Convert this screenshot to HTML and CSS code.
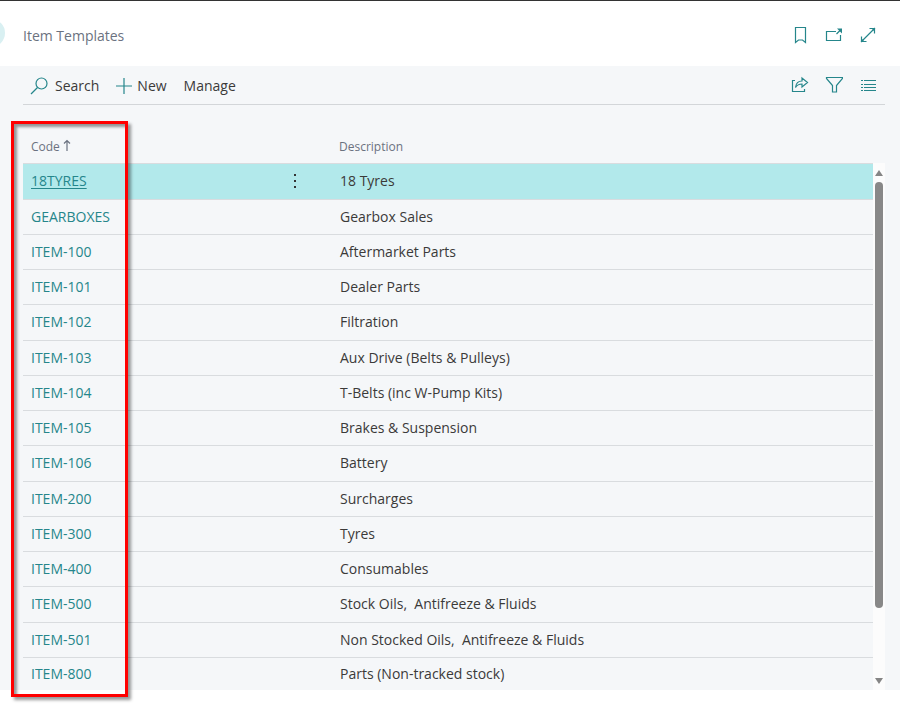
FILE: index.html
```html
<!DOCTYPE html>
<html lang="en">
<head>
<meta charset="utf-8">
<title>Item Templates</title>
<link rel="stylesheet" href="styles.css">
</head>
<body>
<header class="page-header">
  <span class="back-circle"></span>
  <h1 class="title">Item Templates</h1>
  <div class="icons">
    <button class="icon-btn" aria-label="Bookmark"><svg width="18" height="18" viewBox="0 0 18 18"><path d="M4.500 1.500h10v15l-3-2.500h-4l-3 2.500z"/></svg></button>
    <button class="icon-btn" aria-label="Open in new window"><svg width="18" height="18" viewBox="0 0 18 18"><path d="M11 5.500H1.500v9h14V9M11.500 8l4-4"/><path class="solid" d="M12 2.500h5v5z"/></svg></button>
    <button class="icon-btn" aria-label="Expand"><svg width="18" height="18" viewBox="0 0 18 18"><path d="M2 16L16 2M10.500 2.500h5v5M2.500 10.500v5h5"/><path class="solid" d="M12 2h4v4zM2 12v4h4z"/></svg></button>
  </div>
</header>
<main class="panel">
  <div class="toolbar">
    <button class="action"><svg width="18" height="18" viewBox="0 0 18 18"><circle cx="11.500" cy="6.500" r="5.500"/><path d="M7.500 10.500L1 17"/></svg>Search</button>
    <button class="action new"><svg width="16" height="16" viewBox="0 0 16 16"><path d="M8 0v16M0 8h16"/></svg>New</button>
    <button class="action">Manage</button>
    <div class="icons">
      <button class="icon-btn" aria-label="Share"><svg width="18" height="18" viewBox="0 0 18 18"><path d="M4 4.500H1.500v11h12V13"/><path d="M4.500 11.500C5 7 7.500 5 11 5V2l5.500 4.500L11 11V8C8 8 6 9 4.500 11.500z"/></svg></button>
      <button class="icon-btn" aria-label="Filter"><svg width="18" height="18" viewBox="0 0 18 18"><path d="M1.500 1.500h16v1l-6 7v6.500h-4V9.500l-6-7z"/></svg></button>
      <button class="icon-btn" aria-label="List view"><svg width="18" height="18" viewBox="0 0 18 18"><path d="M5 4.500h12M5 8.500h12M5 11.500h12M5 14.500h12M2 4.500h2M2 8.500h2M2 11.500h2M2 14.500h2"/></svg></button>
    </div>
  </div>
  <div class="list">
    <table class="items">
      <thead><tr><th class="code">Code<svg class="sort" width="8" height="12" viewBox="0 0 8 12"><path d="M4 12V2M1 4.500L4 1.500l3 3"/></svg></th><th class="menu"></th><th>Description</th></tr></thead>
      <tbody>
        <tr class="selected"><td><a href="#">18TYRES</a></td><td class="menu"><button class="more" aria-label="Show more options"><svg width="4" height="16" viewBox="0 0 4 16"><path d="M1 1h2v2H1zM1 7h2v2H1zM1 13h2v2H1z"/></svg></button></td><td>18 Tyres</td></tr>
        <tr><td><a href="#">GEARBOXES</a></td><td></td><td>Gearbox Sales</td></tr>
        <tr><td><a href="#">ITEM-100</a></td><td></td><td>Aftermarket Parts</td></tr>
        <tr><td><a href="#">ITEM-101</a></td><td></td><td>Dealer Parts</td></tr>
        <tr><td><a href="#">ITEM-102</a></td><td></td><td>Filtration</td></tr>
        <tr><td><a href="#">ITEM-103</a></td><td></td><td>Aux Drive (Belts &amp; Pulleys)</td></tr>
        <tr><td><a href="#">ITEM-104</a></td><td></td><td>T-Belts (inc W-Pump Kits)</td></tr>
        <tr><td><a href="#">ITEM-105</a></td><td></td><td>Brakes &amp; Suspension</td></tr>
        <tr><td><a href="#">ITEM-106</a></td><td></td><td>Battery</td></tr>
        <tr><td><a href="#">ITEM-200</a></td><td></td><td>Surcharges</td></tr>
        <tr><td><a href="#">ITEM-300</a></td><td></td><td>Tyres</td></tr>
        <tr><td><a href="#">ITEM-400</a></td><td></td><td>Consumables</td></tr>
        <tr><td><a href="#">ITEM-500</a></td><td></td><td>Stock Oils,&nbsp; Antifreeze &amp; Fluids</td></tr>
        <tr><td><a href="#">ITEM-501</a></td><td></td><td>Non Stocked Oils,&nbsp; Antifreeze &amp; Fluids</td></tr>
        <tr><td><a href="#">ITEM-800</a></td><td></td><td>Parts (Non-tracked stock)</td></tr>
      </tbody>
    </table>
    <div class="scrollbar">
      <svg width="8" height="6" viewBox="0 0 8 6"><path d="M4 0l4 6H0z"/></svg>
      <div class="track"><div class="thumb"></div></div>
      <svg width="8" height="6" viewBox="0 0 8 6"><path d="M0 0h8L4 6z"/></svg>
    </div>
    <div class="highlight"></div>
  </div>
</main>
</body>
</html>
```
FILE: styles.css
```css
* { box-sizing: border-box; }

body {
  margin: 0;
  height: 100vh;
  padding-bottom: 15px;
  border-top: 1px solid #333;
  display: flex;
  flex-direction: column;
  background: #fff;
  color: #3b3a39;
  font: 14px/20px "Open Sans", "Noto Sans", sans-serif;
}

button {
  padding: 0;
  border: 0;
  background: none;
  color: inherit;
  font: inherit;
}

svg {
  display: block;
  fill: none;
  stroke: #25868b;
  stroke-width: 1.2;
}

.page-header {
  position: relative;
  flex: none;
  display: flex;
  align-items: center;
  height: 65px;
  padding: 4px 23px 0;
  overflow: hidden;
}

.back-circle {
  position: absolute;
  left: -23px;
  top: 18px;
  width: 28px;
  height: 28px;
  border-radius: 50%;
  background: #d9f0f2;
}

.title {
  margin: 0;
  color: #6b7280;
  font-size: 14px;
  font-weight: 400;
}

.icons {
  display: flex;
  gap: 16px;
  margin-left: auto;
  padding-bottom: 2px;
}

.icon-btn { width: 18px; }

.solid { fill: #25868b; stroke: none; }

.panel {
  flex: 1;
  min-height: 0;
  display: flex;
  flex-direction: column;
  padding: 0 15px 0 23px;
  background: #f5f7f9;
}

.toolbar {
  flex: none;
  display: flex;
  align-items: center;
  gap: 17px;
  height: 39px;
  padding: 2px 8px 0 7px;
  border-bottom: 1px solid #d3d6d9;
}

.action {
  display: flex;
  align-items: center;
  gap: 7px;
}

.new { gap: 5px; }

.list {
  position: relative;
  flex: 1;
  min-height: 0;
  display: flex;
  align-items: flex-start;
  padding-top: 25px;
}

.items {
  flex: 1;
  border-collapse: collapse;
  table-layout: fixed;
}

th, td {
  height: 35px;
  padding: 0 8px;
  border-bottom: 1px solid #d9dcdf;
  text-align: left;
  font-weight: 400;
}

td:last-child { padding-left: 9px; }

tr:nth-child(4n+1) td { height: 36px; }

tbody tr:last-child td {
  height: 34px;
  border-bottom: 0;
}

th {
  height: 33px;
  padding-top: 2px;
  color: #6b7280;
  font-size: 12px;
}

.code { width: 236px; }

.menu {
  width: 72px;
  padding: 0;
}

.sort {
  display: inline-block;
  margin-left: 3px;
  stroke: #6b7280;
}

.more {
  display: block;
  width: 4px;
  margin: 0 auto;
}

.more svg { fill: #333; stroke: none; }

.items a {
  color: #25868b;
  text-decoration: none;
}

.selected { background: #b2e9eb; }

.selected a {
  text-decoration: underline;
  text-underline-offset: 2px;
}

.scrollbar {
  align-self: stretch;
  display: flex;
  flex-direction: column;
  align-items: center;
  gap: 6px;
  width: 12px;
  margin-top: 33px;
  padding: 7px 0 6px;
  background: #fcfcfc;
}

.scrollbar svg { fill: #858585; stroke: none; }

.track {
  flex: 1;
  width: 8px;
}

.thumb {
  height: 87%;
  border-radius: 4px;
  background: #888;
}

.highlight {
  position: absolute;
  left: -12px;
  top: 16px;
  bottom: -7px;
  width: 117px;
  border: 3px solid #f00;
  box-shadow: 3px 3px 3px #0006, inset 3px 3px 3px #0006;
  pointer-events: none;
}
```
